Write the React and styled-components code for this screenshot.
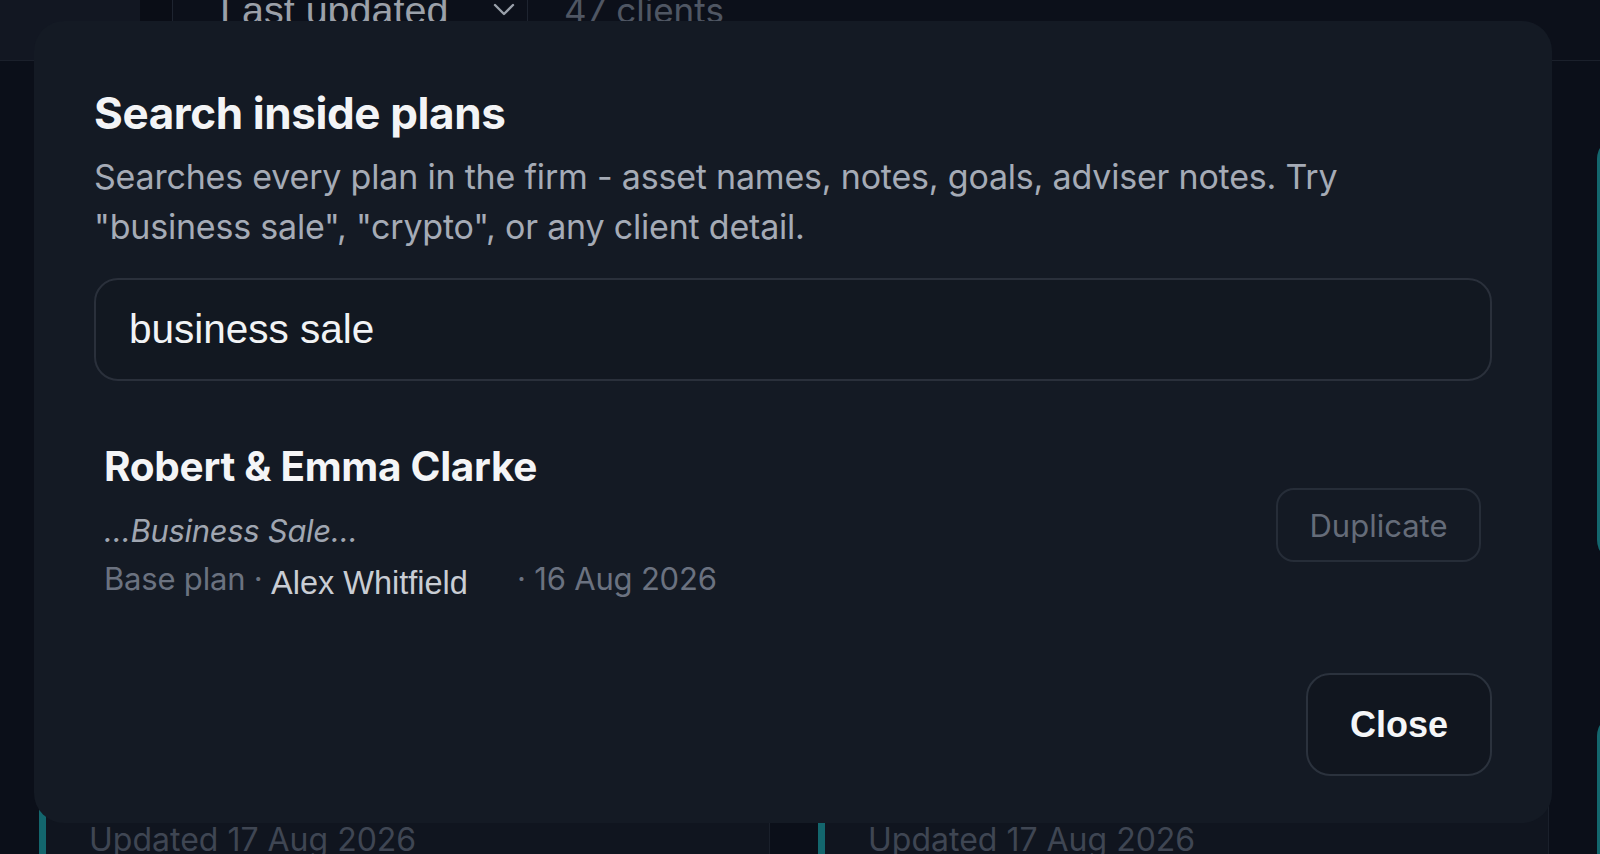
import React from 'react';
import styled, { createGlobalStyle } from "styled-components";

const GlobalStyle = createGlobalStyle`
  html, body {
    margin: 0;
    height: 100%;
    overflow: hidden;
    background: #0b0f19;
  }
  body {
    font-family: Inter, "Noto Sans", sans-serif;
  }
  * { box-sizing: border-box; }
`;

function Chevron() {
  return (
    <svg width="22" height="14" viewBox="0 0 22 14" fill="none">
      <path d="M2 2l9 9 9-9" stroke="#9aa0aa" strokeWidth="2.4" strokeLinecap="round" strokeLinejoin="round" />
    </svg>
  );
}

function App() {
  return (
    <>
      <GlobalStyle />
      <Page>
        <TopBar>
          <SearchStub />
          <StubEdge />
          <SortSelect>
            <span>Last updated</span>
            <Chevron />
          </SortSelect>
          <Count>47 clients</Count>
        </TopBar>

        <Board>
          <Column>
            <Card $height={760}>
              <CardFoot>Updated 17 Aug 2026</CardFoot>
            </Card>
          </Column>
          <Column>
            <Card $height={760}>
              <CardFoot>Updated 17 Aug 2026</CardFoot>
            </Card>
          </Column>
          <Column>
            <Card $height={425} />
            <Card $height={425} />
          </Column>
        </Board>
      </Page>

      <Backdrop>
        <Dialog>
          <Title>Search inside plans</Title>
          <Description>
            Searches every plan in the firm - asset names, notes, goals, adviser notes. Try
            "business sale", "crypto", or any client detail.
          </Description>

          <SearchInput defaultValue="business sale" />

          <Result>
            <ResultText>
              <ClientName>Robert &amp; Emma Clarke</ClientName>
              <Snippet>…Business Sale…</Snippet>
              <Meta>
                Base plan · <Adviser>Alex Whitfield</Adviser>· 16 Aug 2026
              </Meta>
            </ResultText>
            <GhostButton>Duplicate</GhostButton>
          </Result>

          <Footer>
            <CloseButton>Close</CloseButton>
          </Footer>
        </Dialog>
      </Backdrop>
    </>
  );
}

const Page = styled.div`
  height: 100vh;
  overflow: hidden;
`;

const TopBar = styled.header`
  display: flex;
  align-items: flex-start;
  height: 61px;
  border-bottom: 1px solid #1b202b;
  background: #0c101a;
  overflow: hidden;
`;

const SearchStub = styled.div`
  width: 140px;
  height: 61px;
  background: #121722;
`;

const StubEdge = styled.div`
  width: 33px;
  height: 61px;
  background: #0a0d16;
  border-right: 1px solid #1e2430;
`;

const SortSelect = styled.div`
  display: flex;
  align-items: center;
  justify-content: space-between;
  width: 355px;
  height: 44px;
  margin-top: -12px;
  padding: 0 12px 0 47px;
  border-right: 1px solid #1e2430;
  font-family: "Liberation Sans", Arial, sans-serif;
  font-size: 39.5px;
  line-height: 44px;
  color: #9ba0a9;
`;

const Count = styled.div`
  height: 44px;
  margin-top: -12px;
  padding-left: 36px;
  font-size: 35px;
  line-height: 44px;
  color: #4f5663;
`;

const Board = styled.main`
  display: grid;
  grid-template-columns: repeat(3, 731px);
  column-gap: 48px;
  align-items: start;
  padding: 76px 0 0 39px;
`;

const Column = styled.div`
  display: flex;
  flex-direction: column;
  gap: 152px;
`;

const Card = styled.div`
  display: flex;
  flex-direction: column;
  justify-content: flex-end;
  height: ${p => p.$height}px;
  padding: 0 0 36px 43px;
  background: #10151f;
  border: 1px solid #1a202b;
  border-left: 7px solid #13666d;
  border-radius: 22px;
`;

const CardFoot = styled.div`
  font-size: 32px;
  line-height: 40px;
  color: #3f4653;
`;

const Backdrop = styled.div`
  position: fixed;
  inset: 0;
  display: flex;
  padding: 21px 48px 31px 34px;
`;

const Dialog = styled.section`
  flex: 1;
  display: flex;
  flex-direction: column;
  padding: 66px 60px 47px;
  background: #141a24;
  border-radius: 30px;
`;

const Title = styled.h2`
  margin: 0;
  font-size: 44px;
  line-height: 52px;
  font-weight: 700;
  letter-spacing: -0.4px;
  color: #f3f4f6;
`;

const Description = styled.p`
  max-width: 1300px;
  margin: 13px 0 0;
  font-size: 34px;
  line-height: 50px;
  color: #a5abb6;
  letter-spacing: -0.2px;
`;

const SearchInput = styled.input`
  display: block;
  width: 100%;
  height: 103px;
  margin-top: 26px;
  padding: 0 33px;
  background: #121821;
  border: 2px solid #2a303b;
  border-radius: 24px;
  outline: none;
  font-family: "Liberation Sans", Arial, sans-serif;
  font-size: 40.5px;
  color: #f1f3f5;
`;

const Result = styled.div`
  display: flex;
  align-items: center;
  justify-content: space-between;
  margin-top: 62px;
  padding: 0 11px 0 10px;
`;

const ResultText = styled.div`
  display: flex;
  flex-direction: column;
`;

const ClientName = styled.div`
  font-size: 40.5px;
  line-height: 48px;
  font-weight: 700;
  letter-spacing: -0.3px;
  color: #f4f5f7;
`;

const Snippet = styled.div`
  margin-top: 16px;
  font-size: 31px;
  line-height: 47px;
  font-style: italic;
  color: #a0a6b1;
  letter-spacing: -0.3px;
`;

const Meta = styled.div`
  margin-top: 1px;
  font-size: 31px;
  line-height: 47px;
  color: #6b7280;
  letter-spacing: -0.2px;
`;

const Adviser = styled.span`
  display: inline-block;
  width: 246px;
  font-family: "Liberation Sans", Arial, sans-serif;
  font-size: 32.5px;
  color: #c9cdd4;
  vertical-align: -4px;
  letter-spacing: 0;
`;

const GhostButton = styled.button`
  width: 205px;
  height: 74px;
  background: transparent;
  border: 2px solid #262d38;
  border-radius: 18px;
  font-family: Inter, sans-serif;
  font-size: 31px;
  color: #656c79;
`;

const Footer = styled.div`
  display: flex;
  justify-content: flex-end;
  margin-top: auto;
`;

const CloseButton = styled.button`
  width: 186px;
  height: 103px;
  background: #11161f;
  border: 2px solid #2b323d;
  border-radius: 24px;
  font-family: "Liberation Sans", Arial, sans-serif;
  font-size: 36px;
  font-weight: 700;
  color: #f5f6f8;
`;

export default App;
